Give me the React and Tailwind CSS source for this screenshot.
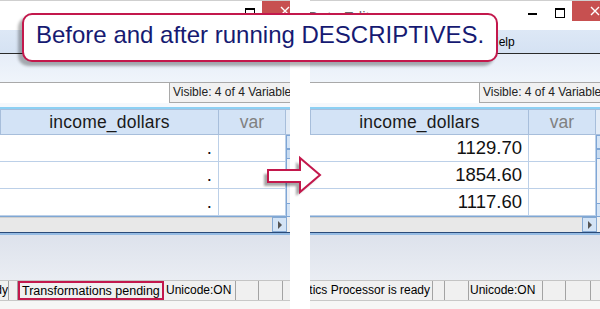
import React from "react";

function TitleBar({ title }) {
  return (
    <div className="h-[30px] w-[307px] flex bg-white border-t border-[#cfcfcf] shrink-0">
      <div className="flex-1 min-w-0 -ml-[2px] pt-[7px] text-[15px] leading-[18px] text-[#6a6a6a] whitespace-nowrap overflow-hidden">
        {title}
      </div>
      <div className="w-[26px] h-[20px] pt-[12px] pl-[8px]">
        <div className="w-[9px] h-[2px] bg-black" />
      </div>
      <div className="w-[26px] h-[20px] pt-[7px] pl-[9px]">
        <div className="w-[10px] h-[10px] border border-black border-t-2" />
      </div>
      <div className="w-[45px] h-[20px] bg-[#c75050] flex items-center justify-center">
        <svg width="10" height="10" viewBox="0 0 10 10">
          <path d="M1 1 L9 9 M9 1 L1 9" stroke="white" strokeWidth="1.4" />
        </svg>
      </div>
    </div>
  );
}

function StatusBar({ cells }) {
  return (
    <div className="h-[20px] flex bg-[#f0f0f0] border-t border-[#c4c4c4] text-[12px] leading-[18px] text-black shrink-0">
      {cells.map((c, i) =>
        c.red ? (
          <div
            key={i}
            style={{ width: c.w }}
            className="shrink-0 border-2 border-[#c3184c] pl-[2px] whitespace-nowrap overflow-hidden text-[12.5px] leading-[16px]"
          >
            {c.text}
          </div>
        ) : (
          <div
            key={i}
            style={{ width: c.w, paddingLeft: c.pl || 0, paddingRight: c.pr || 0 }}
            className={
              "shrink-0 border-r border-[#a3a3a3] whitespace-nowrap overflow-hidden flex " +
              (c.end ? "justify-end" : "justify-start")
            }
          >
            {c.text && <span className="shrink-0">{c.text}</span>}
          </div>
        )
      )}
      <div className="flex-1" />
    </div>
  );
}

function Panel({ left }) {
  const values = left ? [".", ".", "."] : ["1129.70", "1854.60", "1117.60"];
  const statusCells = left
    ? [
        { w: 9, text: "Processor is ready", end: true },
        { w: 9 },
        { w: 146, text: "Transformations pending", red: true },
        { w: 72, text: "Unicode:ON", pl: 2 },
        { w: 23 },
        { w: 24 },
        { w: 30 },
      ]
    : [
        { w: 123, text: "IBM SPSS Statistics Processor is ready", end: true, pr: 2 },
        { w: 12 },
        { w: 24 },
        { w: 74, text: "Unicode:ON", pl: 1 },
        { w: 23 },
        { w: 25 },
        { w: 30 },
      ];
  return (
    <div className="w-[290px] h-[309px] overflow-hidden flex flex-col shrink-0">
      <TitleBar title={left ? "" : "Data Editor"} />
      <div className="h-[24px] shrink-0 bg-gradient-to-b from-[#dde8f6] to-[#d5e2f3] border-b border-[#2a2a2a] flex items-center pl-[180px] text-[12px] text-black">
        {!left && <span>Help</span>}
      </div>
      <div className="h-[28px] shrink-0 bg-gradient-to-b from-[#e6edf8] to-[#f0f5fb]" />
      <div className="h-[21px] shrink-0 flex bg-[#f0f5fb]">
        <div className="w-[169px] bg-white border-t border-[#a9a9a9]" />
        <div className="flex-1 bg-[#f1f1f1] border border-r-0 border-[#a9a9a9] pl-[3px] text-[12px] leading-[19px] text-[#222] whitespace-nowrap overflow-hidden">
          Visible: 4 of 4 Variables
        </div>
      </div>
      <div className="h-[4px] shrink-0 bg-[#f5f8fc]" />
      <div className="h-[2px] shrink-0 bg-[#8dd0f3]" />
      <div className="flex shrink-0">
        <div className="w-[286px] shrink-0 flex flex-col">
          <div className="h-[26px] flex bg-[#d3e3f6] border-t border-b border-[#a7bedb]">
            <div className="w-[219px] border-l border-r border-[#a7bedb] flex items-center justify-center text-[17.5px] tracking-[0.2px] text-[#1a1a1a]">
              income_dollars
            </div>
            <div className="flex-1 border-r border-[#a7bedb] flex items-center justify-center text-[17.5px] text-[#808080]">
              var
            </div>
          </div>
          {values.map((v, i) => (
            <div key={i} className="h-[27px] flex bg-white border-b border-[#bcd0e8]">
              <div className="w-[219px] border-r border-[#bcd0e8] flex items-center justify-end pr-[6px] text-[18.5px] text-[#111]">
                {v}
              </div>
              <div className="flex-1 border-r border-[#bcd0e8]" />
            </div>
          ))}
          <div className="h-[1px] bg-[#7fa7d4]" />
        </div>
        <div className="w-[17px] shrink-0 flex flex-col">
          <div className="h-[26px] bg-[#e3ecf7] border-t border-b border-[#a7bedb]" />
          <div className="h-[14px] bg-[#d6e5f6] border border-[#7fa6d6] flex items-center justify-center">
            <div className="w-0 h-0 border-l-[3px] border-r-[3px] border-b-[3px] border-l-transparent border-r-transparent border-b-[#555]" />
          </div>
          <div className="h-[10px] bg-[#c8dbf0] border border-[#7fa6d6]" />
          <div className="flex-1 bg-[#eef1f6] border-l border-[#7fa6d6]" />
          <div className="h-[14px] bg-[#d6e5f6] border border-[#7fa6d6] flex items-center justify-center">
            <div className="w-0 h-0 border-l-[3px] border-r-[3px] border-t-[3px] border-l-transparent border-r-transparent border-t-[#555]" />
          </div>
        </div>
      </div>
      <div className="h-[15px] shrink-0 flex">
        <div className="w-[272px] bg-[#e8e8e8] border-t border-[#cfcfcf]" />
        <div className="w-[15px] bg-[#d4e4f6] border border-[#86a9d2] flex items-center justify-center">
          <div className="w-0 h-0 border-t-[4px] border-b-[4px] border-l-[4px] border-t-transparent border-b-transparent border-l-[#555]" />
        </div>
        <div className="flex-1 bg-[#f0f0f0]" />
      </div>
      <div className="h-[1px] shrink-0 bg-[#2a4a78]" />
      <div className="h-[2px] shrink-0 bg-[#95bbe3]" />
      <div className="h-[45px] shrink-0 bg-gradient-to-b from-[#dde2ec] to-[#eaedf3]" />
      <StatusBar cells={statusCells} />
      <div className="flex-1 bg-[#f6f6f6] border-t border-[#c8c8c8]" />
    </div>
  );
}

function Callout() {
  return (
    <div className="absolute left-[22px] top-[13px] w-[476px] h-[49px] bg-white border-2 border-[#c3184c] rounded-[10px] shadow-[-4px_4px_3px_rgba(0,0,0,0.3)] pl-[12px] pt-[8px]">
      <div className="text-[24px] leading-[24px] text-[#161a72] whitespace-nowrap">
        Before and after running DESCRIPTIVES.
      </div>
    </div>
  );
}

function Arrow() {
  return (
    <svg className="absolute left-[258px] top-[152px]" width="66" height="48" viewBox="0 0 66 48">
      <defs>
        <filter id="ash" x="-20%" y="-20%" width="140%" height="140%">
          <feGaussianBlur stdDeviation="1.2" />
        </filter>
      </defs>
      <path
        d="M10 18 H42 V6 L62 23 L42 40 V30 H10 Z"
        transform="translate(-4 4)"
        fill="rgba(0,0,0,0.35)"
        filter="url(#ash)"
      />
      <path
        d="M10 18 H42 V6 L62 23 L42 40 V30 H10 Z"
        fill="white"
        stroke="#c3184c"
        strokeWidth="2"
        strokeLinejoin="miter"
      />
    </svg>
  );
}

export default function App() {
  return (
    <div className="relative w-[600px] h-[309px] overflow-hidden bg-white flex font-['Liberation_Sans',Arial,sans-serif]">
      <Panel left />
      <div className="w-[20px] shrink-0 bg-white" />
      <Panel />
      <Callout />
      <Arrow />
    </div>
  );
}
